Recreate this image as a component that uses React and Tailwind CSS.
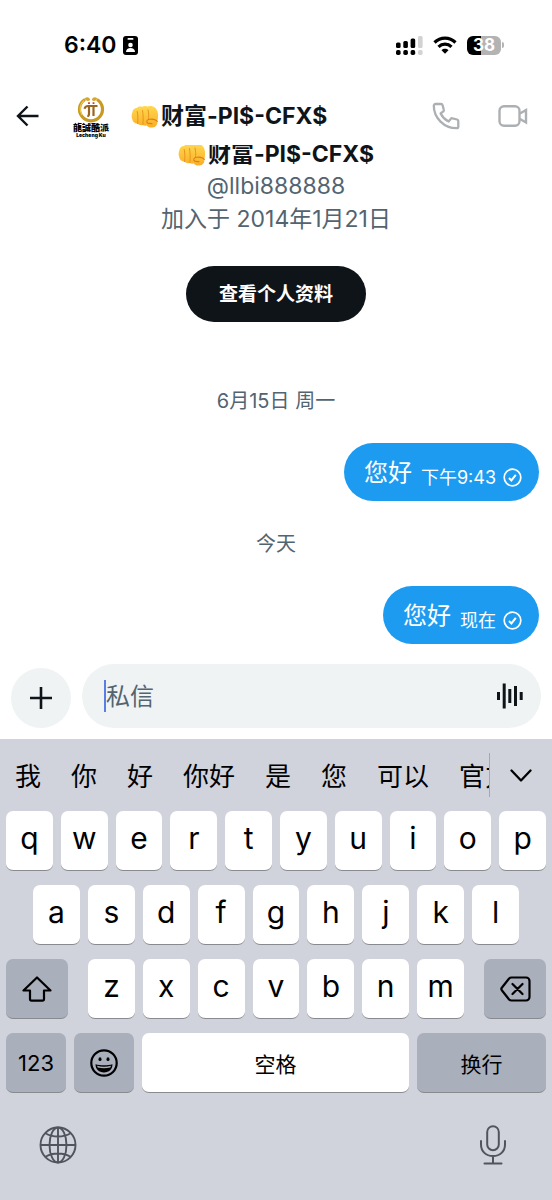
import { useState } from 'react'

const candidates = ['我', '你', '好', '你好', '是', '您', '可以', '官方']
const rowOne = ['q', 'w', 'e', 'r', 't', 'y', 'u', 'i', 'o', 'p']
const rowTwo = ['a', 's', 'd', 'f', 'g', 'h', 'j', 'k', 'l']
const rowThree = ['z', 'x', 'c', 'v', 'b', 'n', 'm']

const Fist = () => (
  <svg className="h-[23px] w-[28px] shrink-0" viewBox="0 0 28 23" aria-hidden="true">
    <defs>
      <linearGradient id="skin" x1="0" y1="0" x2="0" y2="1">
        <stop offset="0" stopColor="#ffd84f" />
        <stop offset="1" stopColor="#fbae27" />
      </linearGradient>
    </defs>
    <path d="M6 3C7 1.600 9.500 1.200 11 1.800 12.500.8 15 .8 16.500 1.500 18.500.5 22 .8 24 2.500c2.600 2.200 3.400 6 3 9.500-.2 1.800-.3 3.400-.6 5 .2 3-2 5.200-4.900 5.500-2.300.2-4.800-.2-5.500-2-1.500.3-3 .2-4.200-.5-1.800.5-3.800.2-5-1.200C3.500 18.500 1.500 16.500 1.200 14 .4 12 .5 9.500 1.300 7.500 1.500 5 3.500 3 6 3z" fill="url(#skin)" />
    <path d="M6.200 6.500c.8 3 .8 8.500.4 12M11.500 5.500c.8 3.500.8 10 .4 14M17 5c.8 3 .8 6.500.5 9.500" fill="none" stroke="#e8951c" strokeWidth="1" strokeLinecap="round" />
    <path d="M26.300 16.500c-1.300-1.800-4-2.600-7.300-2.300-2.200.2-3.400 1.200-3.200 2.700.3 1.500 2.200 1.900 5.200 1.700" fill="none" stroke="#d9821a" strokeWidth="1.100" strokeLinecap="round" />
  </svg>
)

const DisplayName = () => (
  <>
    <Fist />
    <span>财富-PI$-CFX$</span>
  </>
)

const Avatar = () => (
  <div className="flex w-10 flex-col items-center pt-[2px] font-black text-black">
    <svg className="h-7 w-7" viewBox="0 0 28 28" aria-hidden="true">
      <path d="M8 4.500A11.500 11.500 0 1 0 20 4.500" fill="none" stroke="#c99a22" strokeWidth="3.200" />
      <path d="M7 5.500A10.800 10.800 0 0 0 5 20" fill="none" stroke="#eccb56" strokeWidth="1.200" />
      <path d="M7.500 3.500C10 1.300 12.500 2 13.200 5c-2 1.500-4 1.300-5.700-1.500zM20.500 3.500C18 1.300 15.500 2 14.800 5c2 1.500 4 1.300 5.700-1.500z" fill="#d8a62d" />
      <path d="M7.500 13.800c.5-2 1.600-2.800 3.500-2.800h9.500M12 11v8c0 1.400-.5 2-1.700 2M16.500 11v10" fill="none" stroke="#9b6520" strokeWidth="2.200" />
      <path d="M12 7.200v1.800M16.500 7.200v1.800" stroke="#c63b2e" strokeWidth="1.800" />
    </svg>
    <span className="text-[9px] leading-[10px] whitespace-nowrap">龍誠酷派</span>
    <span className="text-[5px] leading-[5px]">Lecheng Ku</span>
  </div>
)

const StatusBar = () => (
  <div className="flex h-[88px] items-center justify-between pt-[2px] pr-12 pl-16 text-black">
    <div className="flex items-center gap-[6px] text-[23px] font-semibold">
      <span>6:40</span>
      <svg className="h-[19px] w-[15px]" viewBox="0 0 15 19" aria-hidden="true">
        <rect width="15" height="19" rx="3" />
        <rect x="4.500" y="2" width="6" height="1.800" rx=".9" fill="#fff" />
        <circle cx="7.500" cy="9" r="2.300" fill="#fff" />
        <path d="M3 16c0-2.800 2-4 4.500-4s4.500 1.200 4.500 4z" fill="#fff" />
      </svg>
    </div>
    <div className="flex items-center gap-[10px]">
      <svg className="h-[19px] w-[27px]" viewBox="0 0 27 19" aria-hidden="true">
        <rect x="0" y="6.500" width="4.600" height="5.500" rx="1.500" />
        <rect x="7.300" y="5" width="4.600" height="7" rx="1.500" />
        <rect x="14.600" y="2.500" width="4.600" height="9.500" rx="1.500" />
        <rect x="22" y="0" width="4.600" height="12" rx="1.500" fill="#d2d2d2" />
        <rect x="0" y="14" width="4.600" height="5" rx="1.700" />
        <rect x="7.300" y="14" width="4.600" height="5" rx="1.700" />
        <rect x="14.600" y="14" width="4.600" height="5" rx="1.700" />
        <rect x="22" y="14" width="4.600" height="5" rx="1.700" fill="#d2d2d2" />
      </svg>
      <svg className="h-[18px] w-[24px]" viewBox="0 0 24 18" fill="none" stroke="#000" strokeWidth="3.200" aria-hidden="true">
        <path d="M1.500 6.500C7.500.6 16.500.6 22.500 6.500" />
        <path d="M5.500 10.800c3.700-3.500 9.300-3.500 13 0" />
        <path d="M8.500 14.200c2-1.900 5-1.900 7 0L12 17.700z" fill="#000" stroke="none" />
      </svg>
      <div className="flex items-center gap-px">
        <div className="flex h-[19px] w-[34px] items-center justify-center rounded-[6px] bg-linear-to-r from-black from-40% to-[#b3b3b3] to-40% pt-px font-['Inter',sans-serif] text-[17px] leading-none font-bold text-white">
          38
        </div>
        <div className="h-[6px] w-[2px] rounded-r-full bg-[#b3b3b3]" />
      </div>
    </div>
  </div>
)

const Header = () => (
  <header className="flex h-[57px] items-center px-4 pr-6 pb-[2px]">
    <button type="button" aria-label="返回">
      <svg className="h-[22px] w-[23px]" viewBox="0 0 23 22" fill="none" stroke="#0f1419" strokeWidth="2.400" aria-hidden="true">
        <path d="M22.500 11H2M11.500 1.500 2 11l9.500 9.500" />
      </svg>
    </button>
    <div className="ml-8">
      <Avatar />
    </div>
    <h1 className="ml-5 flex flex-1 items-center gap-[2px] pt-[2px] text-[23px] font-bold text-[#0f1419]">
      <DisplayName />
    </h1>
    <div className="flex items-center gap-[38px] text-[#adb0b3]">
      <button type="button" aria-label="语音通话">
        <svg className="size-7" viewBox="0 0 28 28" fill="none" stroke="currentColor" strokeWidth="2.300" strokeLinejoin="round" aria-hidden="true">
          <path d="M3.500 2H9c.8 0 1.400.5 1.600 1.200l1.200 4.600c.2.6 0 1.200-.5 1.600l-2.700 2.100c1.800 3.600 4.400 6.200 8 8l2.300-2.700c.4-.5 1-.7 1.600-.5l4.600 1.200c.7.2 1.200.8 1.200 1.600v5.400c0 1-.7 1.700-1.700 1.700C12.200 26.200 1.800 16 1.800 3.700 1.800 2.700 2.500 2 3.500 2z" />
        </svg>
      </button>
      <button type="button" aria-label="视频通话">
        <svg className="h-[22px] w-[30px]" viewBox="0 0 30 22" fill="none" stroke="currentColor" strokeWidth="2.400" aria-hidden="true">
          <rect x="1.500" y="1.200" width="20" height="19.600" rx="4.500" />
          <path d="M22 8.500 28 5v12.500l-6-3.500" />
        </svg>
      </button>
    </div>
  </header>
)

const Bubble = ({ text, time }) => (
  <div className="flex h-[58px] items-center gap-[9px] self-end rounded-full bg-[#1d9bf0] pr-[17px] pl-5 text-white">
    <span className="pt-[2px] text-[24px]">{text}</span>
    <span className="flex items-center gap-[7px] pt-[11px] text-[18px]">
      {time}
      <svg className="size-[19px]" viewBox="0 0 19 19" fill="none" stroke="currentColor" strokeWidth="1.700" aria-hidden="true">
        <circle cx="9.500" cy="9.500" r="8.300" />
        <path d="m6 10 2.400 2.400 4.400-5.600" strokeWidth="2" />
      </svg>
    </span>
  </div>
)

const Composer = () => {
  const [message, setMessage] = useState('')

  return (
    <form className="flex items-end gap-[11px] px-[11px] pt-5 pb-[11px]" onSubmit={(e) => e.preventDefault()}>
      <button type="button" aria-label="添加" className="flex size-[60px] shrink-0 items-center justify-center rounded-full bg-[#eff3f4]">
        <svg className="size-[22px]" viewBox="0 0 22 22" stroke="#0f1419" strokeWidth="2.600" aria-hidden="true">
          <path d="M11 0v22M0 11h22" />
        </svg>
      </button>
      <div className="flex h-16 min-w-0 flex-1 items-center rounded-full bg-[#eff3f4] pr-[18px] pl-[22px]">
        <span className="h-8 w-[2px] bg-[#5b7ee5]" />
        <input
          name="message"
          aria-label="私信"
          value={message}
          onChange={(e) => setMessage(e.target.value)}
          placeholder="私信"
          className="min-w-0 flex-1 pt-[2px] text-[24px] text-[#0f1419] outline-none placeholder:text-[#536471]"
        />
        <button type="button" aria-label="语音消息">
          <svg className="h-[26px] w-[26px]" viewBox="0 0 26 26" stroke="#0f1419" strokeWidth="3" aria-hidden="true">
            <path d="M1.500 9v8M7.200 .5v25M12.800 6v14M18.500 3v20M24.200 9v8" />
          </svg>
        </button>
      </div>
    </form>
  )
}

const Key = ({ children }) => (
  <button type="button" className="flex h-[60px] min-w-0 flex-1 items-center justify-center rounded-[7px] border-b border-[#888a8f] bg-white pb-1 text-[30px]">
    {children}
  </button>
)

const Keyboard = () => (
  <section className="flex flex-1 flex-col bg-[#d0d3db] text-black">
    <div className="flex h-[72px] items-center">
      <div className="flex min-w-0 flex-1 gap-[30px] overflow-hidden pt-[2px] pl-[15px] text-[26px] whitespace-nowrap">
        {candidates.map((c) => (
          <button type="button" key={c} className="shrink-0">{c}</button>
        ))}
      </div>
      <div className="h-11 w-px bg-[#a5a8b0]" />
      <button type="button" aria-label="展开" className="flex w-[62px] justify-center">
        <svg className="h-[13px] w-[22px]" viewBox="0 0 22 13" fill="none" stroke="#000" strokeWidth="2.300" strokeLinecap="round" strokeLinejoin="round" aria-hidden="true">
          <path d="m1.500 1.500 9.500 10 9.500-10" />
        </svg>
      </button>
    </div>

    <div className="flex flex-col gap-[14px] px-[6px]">
      <div className="flex gap-2">
        {rowOne.map((k) => <Key key={k}>{k}</Key>)}
      </div>
      <div className="flex gap-2 px-[27px]">
        {rowTwo.map((k) => <Key key={k}>{k}</Key>)}
      </div>
      <div className="flex gap-5">
        <button type="button" aria-label="Shift" className="flex h-[60px] w-[62px] items-center justify-center rounded-[7px] border-b border-[#888a8f] bg-[#a9afbb]">
          <svg className="h-[26px] w-[30px]" viewBox="0 0 30 26" fill="none" stroke="#000" strokeWidth="2.200" strokeLinejoin="round" aria-hidden="true">
            <path d="M15 1.500 1.500 14.500H8v8.500c0 1 .6 1.600 1.600 1.600h10.800c1 0 1.600-.6 1.600-1.600v-8.500h6.500z" />
          </svg>
        </button>
        <div className="flex flex-1 gap-2">
          {rowThree.map((k) => <Key key={k}>{k}</Key>)}
        </div>
        <button type="button" aria-label="删除" className="flex h-[60px] w-[62px] items-center justify-center rounded-[7px] border-b border-[#888a8f] bg-[#a9afbb]">
          <svg className="h-[26px] w-[31px]" viewBox="0 0 31 26" fill="none" stroke="#000" strokeWidth="2.200" strokeLinecap="round" strokeLinejoin="round" aria-hidden="true">
            <path d="M11.500 1.500H26a3.500 3.500 0 0 1 3.500 3.500v16a3.500 3.500 0 0 1-3.500 3.500H11.500c-1 0-1.700-.3-2.400-1L2 14.500c-.8-.9-.8-2.100 0-3L9.100 2.500c.7-.7 1.400-1 2.400-1zM12.500 8l10 10M22.500 8l-10 10" />
          </svg>
        </button>
      </div>
      <div className="flex gap-2 text-[21px]">
        <button type="button" className="h-[60px] w-[60px] rounded-[7px] border-b border-[#888a8f] bg-[#a9afbb] pt-[2px] text-[22px]">123</button>
        <button type="button" aria-label="表情" className="flex h-[60px] w-[60px] items-center justify-center rounded-[7px] border-b border-[#888a8f] bg-[#a9afbb]">
          <svg className="size-7" viewBox="0 0 28 28" aria-hidden="true">
            <circle cx="14" cy="14" r="12.700" fill="none" stroke="#000" strokeWidth="2.200" />
            <ellipse cx="10" cy="10.200" rx="1.500" ry="1.900" />
            <ellipse cx="18" cy="10.200" rx="1.500" ry="1.900" />
            <path d="M5.500 15.200c5 1.500 12 1.500 17 0 0 5-3.500 8.200-8.500 8.200s-8.500-3.200-8.500-8.200z" />
            <path d="M7 16.800c4.500 1.200 9.500 1.200 14 0l-.7 1.700c-4 1-8.600 1-12.600 0z" fill="#a9afbb" />
          </svg>
        </button>
        <button type="button" className="h-[60px] flex-1 rounded-[7px] border-b border-[#888a8f] bg-white pt-1">空格</button>
        <button type="button" className="h-[60px] w-[129px] rounded-[7px] border-b border-[#888a8f] bg-[#a9afbb] pt-1">换行</button>
      </div>
    </div>

    <div className="flex items-center justify-between px-[39px] pt-8 pb-9 text-[#50545c]">
      <button type="button" aria-label="切换键盘">
        <svg className="size-[38px]" viewBox="0 0 38 38" fill="none" stroke="currentColor" strokeWidth="1.900" aria-hidden="true">
          <circle cx="19" cy="19" r="17.500" />
          <ellipse cx="19" cy="19" rx="8.500" ry="17.500" />
          <path d="M19 1.500v35M1.500 19h35M6.500 7.200c7 4.400 18 4.400 25 0M6.500 30.800c7-4.400 18-4.400 25 0" />
        </svg>
      </button>
      <button type="button" aria-label="听写">
        <svg className="h-10 w-[40px]" viewBox="0 0 40 40" fill="none" stroke="currentColor" strokeWidth="2" strokeLinecap="round" aria-hidden="true">
          <rect x="14.200" y="1.200" width="11.600" height="24" rx="5.800" />
          <path d="M8 16v3.500c0 7 5 11.500 12 11.500s12-4.500 12-11.500V16M20 31v7.500M11.500 38.500h17" />
        </svg>
      </button>
    </div>
  </section>
)

const App = () => (
  <div className="flex min-h-screen flex-col bg-white font-['Inter','Noto_Sans_CJK_SC',sans-serif]">
    <StatusBar />
    <Header />
    <main className="flex flex-col items-center px-[13px] text-[#536471]">
      {/* the profile name is scrolled partly under the header */}
      <div className="flex h-[25px] items-end overflow-hidden">
        <h2 className="flex items-center gap-[2px] text-[23px] leading-8 font-bold text-[#0f1419]">
          <DisplayName />
        </h2>
      </div>
      <p className="text-[23px] leading-[33px]">@llbi888888</p>
      <p className="text-[23px] leading-[33px]">加入于 2014年1月21日</p>
      <button type="button" className="mt-[30px] h-14 rounded-full bg-[#0f1419] px-[33px] pt-[2px] text-[19px] font-bold text-white">
        查看个人资料
      </button>
      <p className="mt-[67px] mb-[30px] text-[20px] leading-6">6月15日 周一</p>
      <Bubble text="您好" time="下午9:43" />
      <p className="mt-[31px] mb-[30px] text-[20px] leading-6">今天</p>
      <Bubble text="您好" time="现在" />
    </main>
    <Composer />
    <Keyboard />
  </div>
)

export default App
